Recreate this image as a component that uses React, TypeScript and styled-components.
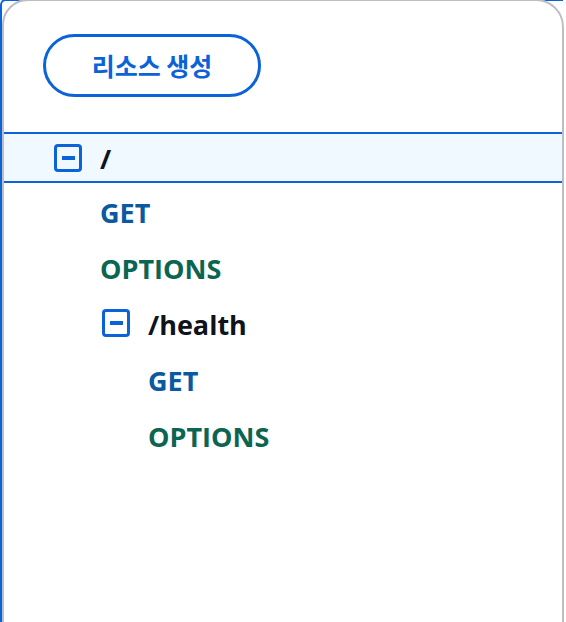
import React from "react";
import styled, { createGlobalStyle } from "styled-components";

const Global = createGlobalStyle`
  html, body {
    margin: 0;
    padding: 0;
    background: #ffffff;
    overflow: hidden;
  }
  body {
    font-family: "Open Sans", "Noto Sans CJK KR", sans-serif;
  }
`;

const Frame = styled.div`
  margin-top: -1px;
  width: 561px;
  height: 640px;
  border-left: 2px solid #0a63d9;
  border-top: 2px solid #0a63d9;
  border-top-left-radius: 6px;
`;

const Panel = styled.div`
  margin-top: -2px;
  width: 558px;
  min-height: 660px;
  background: #ffffff;
  border: 2px solid #bdbdc4;
  border-radius: 26px 28px 0 0;
  display: flex;
  flex-direction: column;
`;

const Toolbar = styled.div`
  padding: 33px 0 0 39px;
  height: 131px;
  box-sizing: border-box;
`;

const CreateButton = styled.button`
  width: 218px;
  height: 63px;
  box-sizing: border-box;
  border: 3px solid #0a63d9;
  border-radius: 32px;
  background: #ffffff;
  color: #0a63d9;
  font-family: "Noto Sans CJK KR", "Open Sans", sans-serif;
  font-weight: 700;
  font-size: 25px;
  cursor: pointer;
  padding: 0 0 2px 0;
`;

const Tree = styled.ul`
  list-style: none;
  margin: 0;
  padding: 0;
`;

const Row = styled.li<{ $depth: number; $selected?: boolean; $leaf?: boolean }>`
  display: flex;
  align-items: center;
  gap: 18px;
  box-sizing: border-box;
  height: ${(p) => (p.$selected ? "51px" : "56px")};
  padding-left: ${(p) => 50 + p.$depth * 48 - (p.$leaf ? 2 : 0)}px;
  background: ${(p) => (p.$selected ? "#f0f9ff" : "transparent")};
  border-top: ${(p) => (p.$selected ? "2px solid #0a63d9" : "none")};
  border-bottom: ${(p) => (p.$selected ? "2px solid #0a63d9" : "none")};
`;

const Toggle = styled.span`
  width: 28px;
  height: 28px;
  box-sizing: border-box;
  border: 3.5px solid #0a63d9;
  border-radius: 4px;
  display: flex;
  align-items: center;
  justify-content: center;
  flex: none;
  &::after {
    content: "";
    width: 13px;
    height: 4px;
    background: #0a63d9;
  }
`;

const PathLabel = styled.span`
  font-family: "Open Sans", sans-serif;
  font-weight: 700;
  font-size: 27px;
  color: #0f141a;
  line-height: 1;
  padding-top: 2px;
`;

const MethodLabel = styled.span<{ $method: string }>`
  font-family: "Open Sans", sans-serif;
  font-weight: 700;
  font-size: 27px;
  line-height: 1;
  padding-top: 2px;
  color: ${(p) => (p.$method === "GET" ? "#0b5aa0" : "#0c6552")};
`;

type Node =
  | { kind: "resource"; path: string; depth: number; selected?: boolean }
  | { kind: "method"; method: string; depth: number };

const nodes: Node[] = [
  { kind: "resource", path: "/", depth: 0, selected: true },
  { kind: "method", method: "GET", depth: 1 },
  { kind: "method", method: "OPTIONS", depth: 1 },
  { kind: "resource", path: "/health", depth: 1 },
  { kind: "method", method: "GET", depth: 2 },
  { kind: "method", method: "OPTIONS", depth: 2 },
];

export default function App() {
  return (
    <>
      <Global />
      <Frame>
        <Panel>
          <Toolbar>
            <CreateButton>리소스 생성</CreateButton>
          </Toolbar>
          <Tree>
            {nodes.map((n, i) =>
              n.kind === "resource" ? (
                <Row key={i} $depth={n.depth} $selected={n.selected}>
                  <Toggle />
                  <PathLabel>{n.path}</PathLabel>
                </Row>
              ) : (
                <Row key={i} $depth={n.depth} $leaf>
                  <MethodLabel $method={n.method}>{n.method}</MethodLabel>
                </Row>
              )
            )}
          </Tree>
        </Panel>
      </Frame>
    </>
  );
}
